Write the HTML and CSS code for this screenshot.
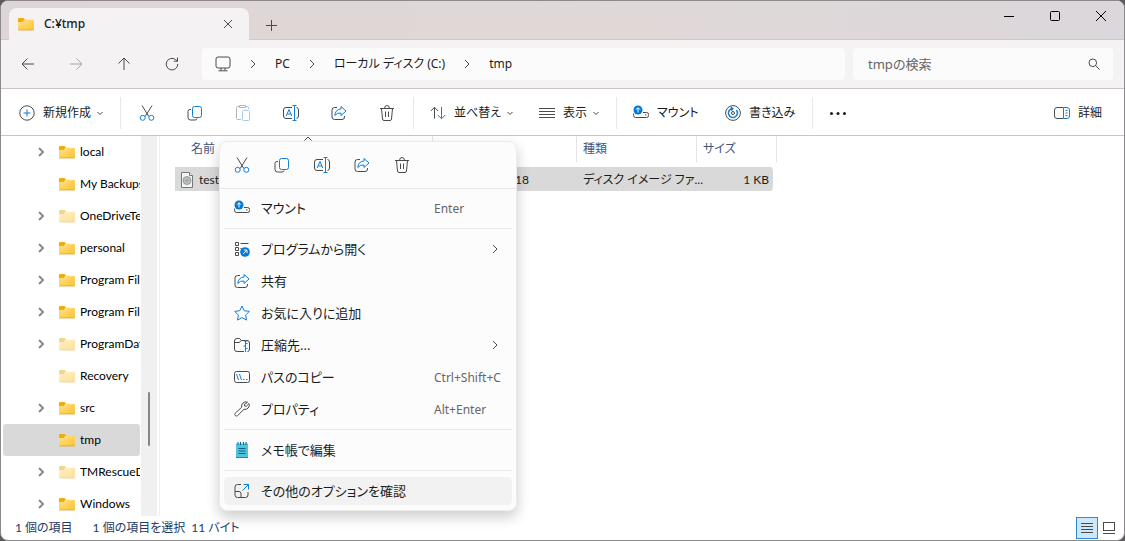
FILE: index.html
```html
<!DOCTYPE html>
<html lang="ja">
<head>
  <meta charset="UTF-8">
  <meta name="viewport" content="width=device-width, initial-scale=1.0">
  <title>C:¥tmp</title>
  <link rel="stylesheet" href="styles.css">
</head>
<body>
  <!-- shared icons -->
  <svg class="sprite" aria-hidden="true">
    <defs>
      <linearGradient id="folder-fill" x1="0" y1="0" x2="1" y2="1">
        <stop offset="0" stop-color="#ffe08a"/>
        <stop offset="1" stop-color="#fcc433"/>
      </linearGradient>
    </defs>
    <symbol id="folder" viewBox="0 0 16 16">
      <path d="M0 3.2Q0 2 1.2 2h4.2l2 1.8h-1L5 6H0z" fill="#f3ab0c"/>
      <path d="M0 6h4.6l2-2.2h8.2q1.2 0 1.2 1.1v8.2q0 .9-1 .9H1q-1 0-1-.9z" fill="url(#folder-fill)"/>
      <path d="M.3 14h15.4" stroke="#e3a21a" stroke-width=".8"/>
    </symbol>
    <symbol id="chevron" viewBox="0 0 16 16"><path d="M6 4l4 4-4 4"/></symbol>
    <symbol id="chevron-down" viewBox="0 0 8 8"><path d="M1.5 3L4 5.500 6.500 3"/></symbol>
    <symbol id="close" viewBox="0 0 16 16"><path d="M4 4l8 8M12 4l-8 8"/></symbol>
    <symbol id="cut" viewBox="0 0 16 16">
      <path d="M3 .5l6.800 11M13 .5L6.200 11.500"/>
      <g class="blue"><circle cx="3.700" cy="12.800" r="2.500"/><circle cx="12.300" cy="12.800" r="2.500"/></g>
    </symbol>
    <symbol id="copy" viewBox="0 0 16 16">
      <path d="M4 4.500H3Q1 4.500 1 6.500v6q0 2.500 2.500 2.500H8q2 0 2-1.500"/>
      <rect class="blue" x="5.500" y="1.500" width="9" height="11" rx="2"/>
    </symbol>
    <symbol id="paste" viewBox="0 0 16 16">
      <path d="M6 14.500H2.500q-1 0-1-1v-11q0-1 1-1H4.500M10.500 1.500h2q1 0 1 1V4M4.500.5h6v2h-6z"/>
      <rect class="blue" x="7.500" y="5.500" width="7" height="10" rx="1"/>
    </symbol>
    <symbol id="rename" viewBox="0 0 16 16">
      <path d="M9 2.500H3Q.5 2.500.5 5v6q0 2.500 2.500 2.500h6M13.500 2.500q2 .3 2 2.500v6q0 2.200-2 2.500"/>
      <path class="blue" d="M3.200 11L6 4.500 8.800 11M4.200 9h3.600M9.500.5h4M11.500.5v15M9.500 15.500h4"/>
    </symbol>
    <symbol id="share" viewBox="0 0 16 16">
      <path d="M6 2.500H3.500Q1 2.500 1 5v7q0 2.500 2.500 2.500H11q2.500 0 2.500-2.500v-1"/>
      <path class="blue" d="M10 1.500L15 6l-5 4.500V8Q6 7.500 3.800 10.500 4.200 4.500 10 4z"/>
    </symbol>
    <symbol id="trash" viewBox="0 0 16 16">
      <path d="M1 3.500h14M5.500 3.500q0-3 2.500-3t2.500 3M2.500 3.500l1 10.500q.2 1.500 1.500 1.500h6q1.300 0 1.500-1.500l1-10.500M6.500 6.500v5.500M9.500 6.500v5.500"/>
    </symbol>
    <symbol id="mount" viewBox="0 0 16 16">
      <path d="M.6 8.500v2q0 2 2 2h11q2 0 2-2v-1q0-2-2-2H10M12 9.900h1.500"/>
      <circle class="solid" cx="5" cy="5" r="4.500"/>
      <path class="white" d="M5 7.500V2.800M3 4.700l2-2 2 2"/>
    </symbol>
    <symbol id="arrow-left" viewBox="0 0 16 16"><path d="M14 8H2M7.500 2.500L2 8l5.500 5.500"/></symbol>
  </svg>

  <div class="window">
    <header class="titlebar">
      <div class="tab">
        <svg class="icon"><use href="#folder"/></svg>
        <span class="tab-title">C:¥tmp</span>
        <button class="tab-close" aria-label="閉じる"><svg class="icon"><use href="#close"/></svg></button>
      </div>
      <button class="tab-add" aria-label="新しいタブ"><svg class="icon" viewBox="0 0 16 16"><path d="M8.500 3v11M3 8.500h11"/></svg></button>
      <div class="controls">
        <button aria-label="最小化"><svg class="icon" viewBox="0 0 16 16"><path d="M3 8.500h10"/></svg></button>
        <button aria-label="最大化"><svg class="icon" viewBox="0 0 16 16"><rect x="3.500" y="3.500" width="9" height="9" rx="1"/></svg></button>
        <button aria-label="ウィンドウを閉じる"><svg class="icon" viewBox="0 0 16 16"><path d="M3 3l10 10M13 3L3 13"/></svg></button>
      </div>
    </header>

    <nav class="navbar">
      <div class="nav-buttons">
        <button aria-label="戻る"><svg class="icon"><use href="#arrow-left"/></svg></button>
        <button class="forward" aria-label="進む" disabled><svg class="icon"><use href="#arrow-left"/></svg></button>
        <button class="up" aria-label="上へ"><svg class="icon"><use href="#arrow-left"/></svg></button>
        <button aria-label="更新"><svg class="icon" viewBox="0 0 16 16"><path d="M13.800 8A5.800 5.800 0 1 1 11.500 3.500L13.500 5.200M13.500 1.500v3.700H9.800"/></svg></button>
      </div>
      <div class="address">
        <svg class="icon monitor" viewBox="0 0 16 16"><rect x="1" y="1" width="14" height="11" rx="2"/><path d="M6 12v2.500M10 12v2.500M3.500 14.800h9"/></svg>
        <svg class="icon crumb-sep"><use href="#chevron"/></svg>
        <a href="#">PC</a>
        <svg class="icon crumb-sep"><use href="#chevron"/></svg>
        <a href="#">ローカル ディスク (C:)</a>
        <svg class="icon crumb-sep"><use href="#chevron"/></svg>
        <a href="#">tmp</a>
      </div>
      <div class="search">
        <input type="search" aria-label="検索" placeholder="tmpの検索">
        <svg class="icon" viewBox="0 0 16 16"><circle cx="6.800" cy="6.800" r="3.800"/><path d="M9.600 9.600l4 4"/></svg>
      </div>
    </nav>

    <div class="toolbar">
      <button class="tool tool-new">
        <svg class="icon" viewBox="0 0 16 16"><circle cx="8" cy="8" r="7.200"/><path class="blue" d="M8 4.500v7M4.500 8h7"/></svg>
        <span>新規作成</span><svg class="down"><use href="#chevron-down"/></svg>
      </button>
      <div class="tool-icons">
        <button aria-label="切り取り"><svg class="icon"><use href="#cut"/></svg></button>
        <button aria-label="コピー"><svg class="icon"><use href="#copy"/></svg></button>
        <button aria-label="貼り付け" disabled><svg class="icon"><use href="#paste"/></svg></button>
        <button aria-label="名前の変更"><svg class="icon"><use href="#rename"/></svg></button>
        <button aria-label="共有"><svg class="icon"><use href="#share"/></svg></button>
        <button aria-label="削除"><svg class="icon"><use href="#trash"/></svg></button>
      </div>
      <div class="tool-group">
        <button class="tool tool-sort">
          <svg class="icon" viewBox="0 0 16 16"><path d="M4.500 13.500v-11M.8 6l3.700-3.700L8.200 6"/><path class="blue" d="M11.500 2v11.500M7.800 10l3.700 3.700 3.700-3.700"/></svg>
          <span>並べ替え</span><svg class="down"><use href="#chevron-down"/></svg>
        </button>
        <button class="tool tool-view">
          <svg class="icon" viewBox="0 0 16 16"><path d="M0 3.500h16M0 6.500h16M0 9.500h16M0 12.500h16"/></svg>
          <span>表示</span><svg class="down"><use href="#chevron-down"/></svg>
        </button>
      </div>
      <div class="tool-group">
        <button class="tool tool-mount"><svg class="icon"><use href="#mount"/></svg><span>マウント</span></button>
        <button class="tool tool-burn">
          <svg class="icon" viewBox="0 0 16 16"><circle cx="8" cy="8" r="7.400"/><circle cx="8" cy="8" r="1.500"/><path class="blue thick" d="M11.300 5A4.500 4.500 0 1 1 7.500 3.500M5.800 2.200l2 1.400-1.500 2"/></svg>
          <span>書き込み</span>
        </button>
      </div>
      <button class="more" aria-label="その他"><svg class="icon" viewBox="0 0 16 16"><g class="dots"><circle cx="1.500" cy="8.500" r="1.500"/><circle cx="8" cy="8.500" r="1.500"/><circle cx="14.500" cy="8.500" r="1.500"/></g></svg></button>
      <button class="tool tool-details">
        <svg class="icon" viewBox="0 0 16 16"><path d="M9 13.500H3Q.5 13.500.5 11V5Q.5 2.500 3 2.500h6"/><path class="blue" d="M9.500 2.500H13q2.500 0 2.500 2.500v6q0 2.500-2.500 2.500H9.500zM11.500 5.500h2M11.500 8h2M11.500 10.500h2"/></svg>
        <span>詳細</span>
      </button>
    </div>

    <div class="content">
      <aside class="sidebar">
        <ul class="tree">
          <li><svg class="icon arrow"><use href="#chevron"/></svg><svg class="icon"><use href="#folder"/></svg><a href="#">local</a></li>
          <li class="leaf"><svg class="icon"><use href="#folder"/></svg><a href="#">My Backups</a></li>
          <li class="hidden-item"><svg class="icon arrow"><use href="#chevron"/></svg><svg class="icon"><use href="#folder"/></svg><a href="#">OneDriveTe</a></li>
          <li><svg class="icon arrow"><use href="#chevron"/></svg><svg class="icon"><use href="#folder"/></svg><a href="#">personal</a></li>
          <li><svg class="icon arrow"><use href="#chevron"/></svg><svg class="icon"><use href="#folder"/></svg><a href="#">Program Fil</a></li>
          <li><svg class="icon arrow"><use href="#chevron"/></svg><svg class="icon"><use href="#folder"/></svg><a href="#">Program Fil</a></li>
          <li class="hidden-item"><svg class="icon arrow"><use href="#chevron"/></svg><svg class="icon"><use href="#folder"/></svg><a href="#">ProgramDat</a></li>
          <li class="leaf hidden-item"><svg class="icon"><use href="#folder"/></svg><a href="#">Recovery</a></li>
          <li><svg class="icon arrow"><use href="#chevron"/></svg><svg class="icon"><use href="#folder"/></svg><a href="#">src</a></li>
          <li class="leaf current"><svg class="icon"><use href="#folder"/></svg><a href="#">tmp</a></li>
          <li class="hidden-item"><svg class="icon arrow"><use href="#chevron"/></svg><svg class="icon"><use href="#folder"/></svg><a href="#">TMRescueD</a></li>
          <li><svg class="icon arrow"><use href="#chevron"/></svg><svg class="icon"><use href="#folder"/></svg><a href="#">Windows</a></li>
        </ul>
        <div class="scrollbar"><div class="thumb"></div></div>
      </aside>

      <main class="files">
        <svg class="sort-mark" viewBox="0 0 8 5"><path d="M.5 4.500L4 1l3.500 3.500"/></svg>
        <table>
          <thead>
            <tr><th class="col-name">名前</th><th class="col-date"></th><th class="col-type">種類</th><th class="col-size">サイズ</th></tr>
          </thead>
          <tbody>
            <tr>
              <td>
                <div class="file">
                  <svg class="icon disc" viewBox="0 0 16 16"><path d="M2.500.5h8l3 3v12h-11z"/><path d="M10.500.5v3h3"/><circle cx="8" cy="8.500" r="4"/><circle cx="8" cy="8.500" r="1"/></svg>
                  <span>test</span>
                </div>
              </td>
              <td class="date">18</td>
              <td>ディスク イメージ ファ...</td>
              <td class="size">1 KB</td>
            </tr>
          </tbody>
        </table>
      </main>
    </div>

    <footer class="statusbar">
      <span class="count">1 個の項目</span>
      <span>1 個の項目を選択</span>
      <span>11 バイト</span>
      <div class="views">
        <button class="active" aria-label="詳細表示"><svg class="icon" viewBox="0 0 16 16"><path d="M2 3.500h12M2 6.500h12M2 9.500h12M2 12.500h12"/></svg></button>
        <button aria-label="大アイコン"><svg class="icon" viewBox="0 0 16 16"><rect x="2.500" y="2.500" width="11" height="8"/><path d="M2 13.500h12"/></svg></button>
      </div>
    </footer>

    <div class="menu" role="menu">
      <div class="menu-actions">
        <button aria-label="切り取り"><svg class="icon"><use href="#cut"/></svg></button>
        <button aria-label="コピー"><svg class="icon"><use href="#copy"/></svg></button>
        <button aria-label="名前の変更"><svg class="icon"><use href="#rename"/></svg></button>
        <button aria-label="共有"><svg class="icon"><use href="#share"/></svg></button>
        <button aria-label="削除"><svg class="icon"><use href="#trash"/></svg></button>
      </div>
      <button class="item" role="menuitem"><svg class="icon"><use href="#mount"/></svg><span>マウント</span><kbd>Enter</kbd></button>
      <hr>
      <button class="item" role="menuitem">
        <svg class="icon" viewBox="0 0 16 16"><path d="M1.500 1.500h3v3h-3zM1.500 6.500h3v3h-3zM1.500 11.500h3v3h-3zM6.500 2.500h8M6.500 7.500h1"/><circle class="solid" cx="11" cy="11" r="4.800"/><path class="white" d="M9 13l4-4M9.800 9H13v3.200"/></svg>
        <span>プログラムから開く</span><svg class="icon sub"><use href="#chevron"/></svg>
      </button>
      <button class="item" role="menuitem"><svg class="icon"><use href="#share"/></svg><span>共有</span></button>
      <button class="item" role="menuitem">
        <svg class="icon" viewBox="0 0 16 16"><path class="blue" d="M8 1l2.200 4.700 5.100.7-3.700 3.600.9 5.100L8 12.600l-4.500 2.500.9-5.100L.7 6.400l5.100-.7z"/></svg>
        <span>お気に入りに追加</span>
      </button>
      <button class="item" role="menuitem">
        <svg class="icon" viewBox="0 0 16 16"><path d="M10 14.500H3Q.5 14.500.5 12V4Q.5 1.500 3 1.500h2.500l2 2H13q2.500 0 2.500 2.500v6q0 2.500-2 2.500M.5 5.500H5l2.500-2"/><path class="blue" d="M9.500 4h4M11.500 4v11M11.500 6.500h2M9.500 9h2M11.500 11.500h2"/></svg>
        <span>圧縮先...</span><svg class="icon sub"><use href="#chevron"/></svg>
      </button>
      <button class="item" role="menuitem">
        <svg class="icon" viewBox="0 0 16 16"><rect x=".5" y="2.500" width="15" height="11" rx="2"/><path class="blue" d="M2.500 5l2 6M5.500 5l2 6M9 10.500h1.500M12 10.500h1.500"/></svg>
        <span>パスのコピー</span><kbd>Ctrl+Shift+C</kbd>
      </button>
      <button class="item" role="menuitem">
        <svg class="icon" viewBox="0 0 16 16"><path d="M13.500 1.200a4.300 4.300 0 0 0-5.800 5L1.200 12.300q-1 1.300.1 2.300 1 1 2.300 0L10 8.300a4.300 4.300 0 0 0 5-5.800l-2.700 2.700-1.700-.2-.3-1.500z"/></svg>
        <span>プロパティ</span><kbd>Alt+Enter</kbd>
      </button>
      <hr>
      <button class="item" role="menuitem">
        <svg class="icon notepad" viewBox="0 0 16 16"><rect x="2" y="1.500" width="12" height="14" fill="#4fc3e0" stroke="none"/><path d="M2 15.500h12" stroke="#a0622d"/><path d="M4 0v3M6.500 0v3M9.500 0v3M12 0v3M4.500 6.500h7M4.500 9h7M4.500 11.500h7" stroke="#11627c"/></svg>
        <span>メモ帳で編集</span>
      </button>
      <hr>
      <button class="item hover" role="menuitem">
        <svg class="icon" viewBox="0 0 16 16"><path d="M7 1.500H3.500Q1 1.500 1 4v8q0 2.500 2.500 2.500h8Q14 14.500 14 12V9M1 8.500h4Q7 8.500 7 10.500v4"/><path class="blue" d="M8.500 7.500l6-6M9.500 1.500h5v5"/></svg>
        <span>その他のオプションを確認</span>
      </button>
    </div>
  </div>
</body>
</html>
```

FILE: styles.css
```css
* {
  box-sizing: border-box;
}

body {
  margin: 0;
  background: #5c5a5c;
  font-family: "Noto Sans", "Noto Sans CJK JP", sans-serif;
  font-feature-settings: "palt";
  font-size: 12px;
  line-height: 16px;
  color: #1b1b1b;
}

button {
  display: flex;
  align-items: center;
  justify-content: center;
  padding: 0;
  border: 0;
  background: none;
  color: inherit;
  font: inherit;
  font-feature-settings: inherit;
  white-space: nowrap;
}

a {
  color: inherit;
  text-decoration: none;
  white-space: nowrap;
}

svg {
  display: block;
  flex: none;
  fill: none;
  stroke: #4a4a4a;
  stroke-width: 1;
}

.sprite {
  position: absolute;
  width: 0;
  height: 0;
}

#folder path:not([stroke]) {
  stroke: none;
}

.icon {
  width: 16px;
  height: 16px;
}

.blue {
  stroke: #0f7fd8;
}

.thick {
  stroke-width: 1.5;
}

.solid {
  fill: #0078d4;
  stroke: none;
}

.white {
  stroke: #fff;
}

.dots {
  fill: #1b1b1b;
  stroke: none;
}

/* window */
.window {
  position: relative;
  display: flex;
  flex-direction: column;
  height: 100vh;
  overflow: hidden;
  border: 1px solid #8b898b;
  border-radius: 8px;
  background: #fff;
}

.titlebar {
  display: flex;
  height: 39px;
  padding-left: 8px;
  border-bottom: 1px solid #cfc8c8;
  background: linear-gradient(90deg, #ded6d6, #e0d8d6 50%, #dcd7dc);
}

.tab {
  display: flex;
  align-items: center;
  width: 240px;
  height: 32px;
  margin-top: 7px;
  padding: 0 13px 0 9px;
  border-radius: 8px 8px 0 0;
  background: #f5f2f3;
}

.tab-title {
  flex: 1;
  margin-left: 10px;
  font-weight: 500;
}

.tab-add {
  width: 44px;
  margin-top: 9px;
}

.controls {
  display: flex;
  height: 29px;
  margin-left: auto;
}

.controls button {
  width: 46px;
}

.controls svg {
  stroke: #000;
}

.navbar {
  display: flex;
  align-items: center;
  gap: 8px;
  height: 49px;
  padding: 0 11px 0 3px;
  border-bottom: 1px solid #cbc3c5;
  background: #f5f2f3;
}

.nav-buttons {
  display: flex;
  width: 190px;
}

.nav-buttons button {
  flex: none;
  width: 48px;
  height: 32px;
}

.forward svg {
  transform: scaleX(-1);
  opacity: .45;
}

.up svg {
  transform: rotate(90deg);
}

.address,
.search {
  display: flex;
  align-items: center;
  height: 32px;
  border-radius: 4px;
  background: #fcfbfc;
}

.address {
  flex: 1;
  padding-left: 13px;
}

.crumb-sep {
  margin: 0 14px;
}

.search {
  width: 260px;
  padding: 0 11px 0 15px;
}

.search input {
  flex: 1;
  min-width: 0;
  padding: 0;
  border: 0;
  outline: 0;
  background: none;
  font: inherit;
  font-size: 13px;
  font-feature-settings: inherit;
}

.search input::placeholder {
  color: #666;
}

/* toolbar */
.toolbar {
  display: flex;
  align-items: center;
  height: 47px;
  padding: 2px 0 0 18px;
  border-bottom: 1px solid #cdc3c3;
}

.tool {
  gap: 8px;
  height: 32px;
}

.tool .down {
  width: 8px;
  height: 8px;
  margin-left: -3px;
}

.tool-new {
  width: 101px;
  justify-content: flex-start;
}

.tool-icons,
.tool-group {
  display: flex;
  height: 32px;
  border-left: 1px solid #e8e8e8;
}

.tool-icons {
  width: 293px;
  padding-left: 2px;
}

.tool-icons button {
  width: 48px;
}

.tool-icons button:disabled {
  opacity: .4;
}

.tool-group {
  gap: 24px;
  padding-left: 16px;
}

.tool-group .tool {
  justify-content: flex-start;
}

.tool-sort {
  width: 85px;
}

.tool-view {
  width: 77px;
}

.tool-mount {
  width: 68px;
}

.tool-burn {
  width: 70px;
}

.more {
  width: 50px;
  height: 32px;
  margin-left: 17px;
  border-left: 1px solid #e8e8e8;
}

.tool-details {
  margin-left: auto;
  margin-right: 22px;
}

/* folder tree */
.content {
  display: flex;
  flex: 1;
  min-height: 0;
  font-family: Lato, "Noto Sans CJK JP", sans-serif;
}

.sidebar {
  display: flex;
  width: 159px;
  padding-right: 2px;
  border-right: 1px solid #f0f0f0;
}

.tree {
  flex: 1;
  min-width: 0;
  margin: 0;
  padding: 0 1px 0 2px;
  overflow: hidden;
  list-style: none;
}

.tree li {
  display: flex;
  align-items: center;
  height: 32px;
  padding-left: 30px;
  overflow: hidden;
  border-radius: 3px;
}

.tree .arrow {
  margin-right: 10px;
  stroke: #8a8a8a;
  stroke-width: 2;
}

.tree .leaf {
  padding-left: 56px;
}

.tree a {
  margin-left: 5px;
  color: #000;
}

.hidden-item .icon:not(.arrow) {
  opacity: .5;
}

.current {
  background: #d9d9d9;
}

.scrollbar {
  width: 16px;
  background: #f0f0f0;
}

.thumb {
  width: 2px;
  height: 54px;
  margin: 256px 0 0 7px;
  border-radius: 1px;
  background: #868686;
}

/* file list */
.files {
  flex: 1;
  min-width: 0;
  padding-left: 15px;
}

.sort-mark {
  width: 8px;
  height: 5px;
  margin: 0 0 -5px 129px;
}

table {
  border-collapse: separate;
  border-spacing: 0;
  table-layout: fixed;
  width: 602px;
}

th {
  height: 26px;
  padding: 0 0 0 6px;
  border-right: 1px solid #e5e5e5;
  color: #42557b;
  font-weight: 400;
  text-align: left;
}

.col-name {
  width: 258px;
  padding-left: 16px;
}

.col-date {
  width: 144px;
}

.col-type {
  width: 120px;
}

.col-size {
  width: 80px;
}

tbody::before {
  content: "";
  display: block;
  height: 5px;
}

td {
  height: 24px;
  padding: 1px 0 0 6px;
  background: #d9d9d9;
  white-space: nowrap;
}

.file {
  display: flex;
  align-items: center;
  gap: 4px;
  margin-left: -2px;
}

.disc {
  fill: #f4f4f4;
  stroke: #777;
}

.disc circle {
  fill: #b8c0c0;
  stroke: #999;
}

.date {
  padding-left: 82px;
}

.size {
  padding-right: 4px;
  border-right: 4px solid transparent;
  border-radius: 0 6px 6px 0;
  background-clip: padding-box;
  text-align: right;
}

/* status bar */
.statusbar {
  display: flex;
  align-items: center;
  gap: 6px;
  height: 24px;
  padding: 0 4px 0 14px;
  color: #223a66;
  font-family: Lato, "Noto Sans CJK JP", sans-serif;
}

.count {
  margin-right: 14px;
}

.views {
  display: flex;
  margin-left: auto;
}

.views button {
  width: 22px;
  height: 22px;
}

.views .active {
  border: 1px solid #2a8ad4;
  background: #cce8fa;
}

/* context menu */
.menu {
  position: absolute;
  top: 140px;
  left: 218px;
  width: 298px;
  padding-bottom: 3px;
  border: 1px solid #ececec;
  border-radius: 8px;
  background: #fcfcfc;
  box-shadow: 0 6px 14px rgba(0, 0, 0, .2);
  font-size: 13px;
}

.menu-actions {
  display: flex;
  height: 47px;
  margin-bottom: 3px;
  padding-left: 2px;
  border-bottom: 1px solid #e6e6e6;
}

.menu-actions button {
  width: 40px;
}

.item {
  width: 100%;
  height: 32px;
  justify-content: flex-start;
  padding: 0 11px 0 10px;
  border: solid transparent;
  border-width: 2px 4px;
  border-radius: 8px;
  background-clip: padding-box;
}

.item span {
  flex: 1;
  margin-left: 11px;
  text-align: left;
}

.item kbd {
  width: 74px;
  margin-right: -7px;
  padding-top: 2px;
  color: #666;
  font-family: inherit;
  font-size: 12px;
  text-align: left;
}

.sub {
  margin-right: -2px;
}

.hover {
  background-color: #f2f2f2;
}

hr {
  margin: 4px;
  border: 0;
  border-top: 1px solid #e8e8e8;
}
```
